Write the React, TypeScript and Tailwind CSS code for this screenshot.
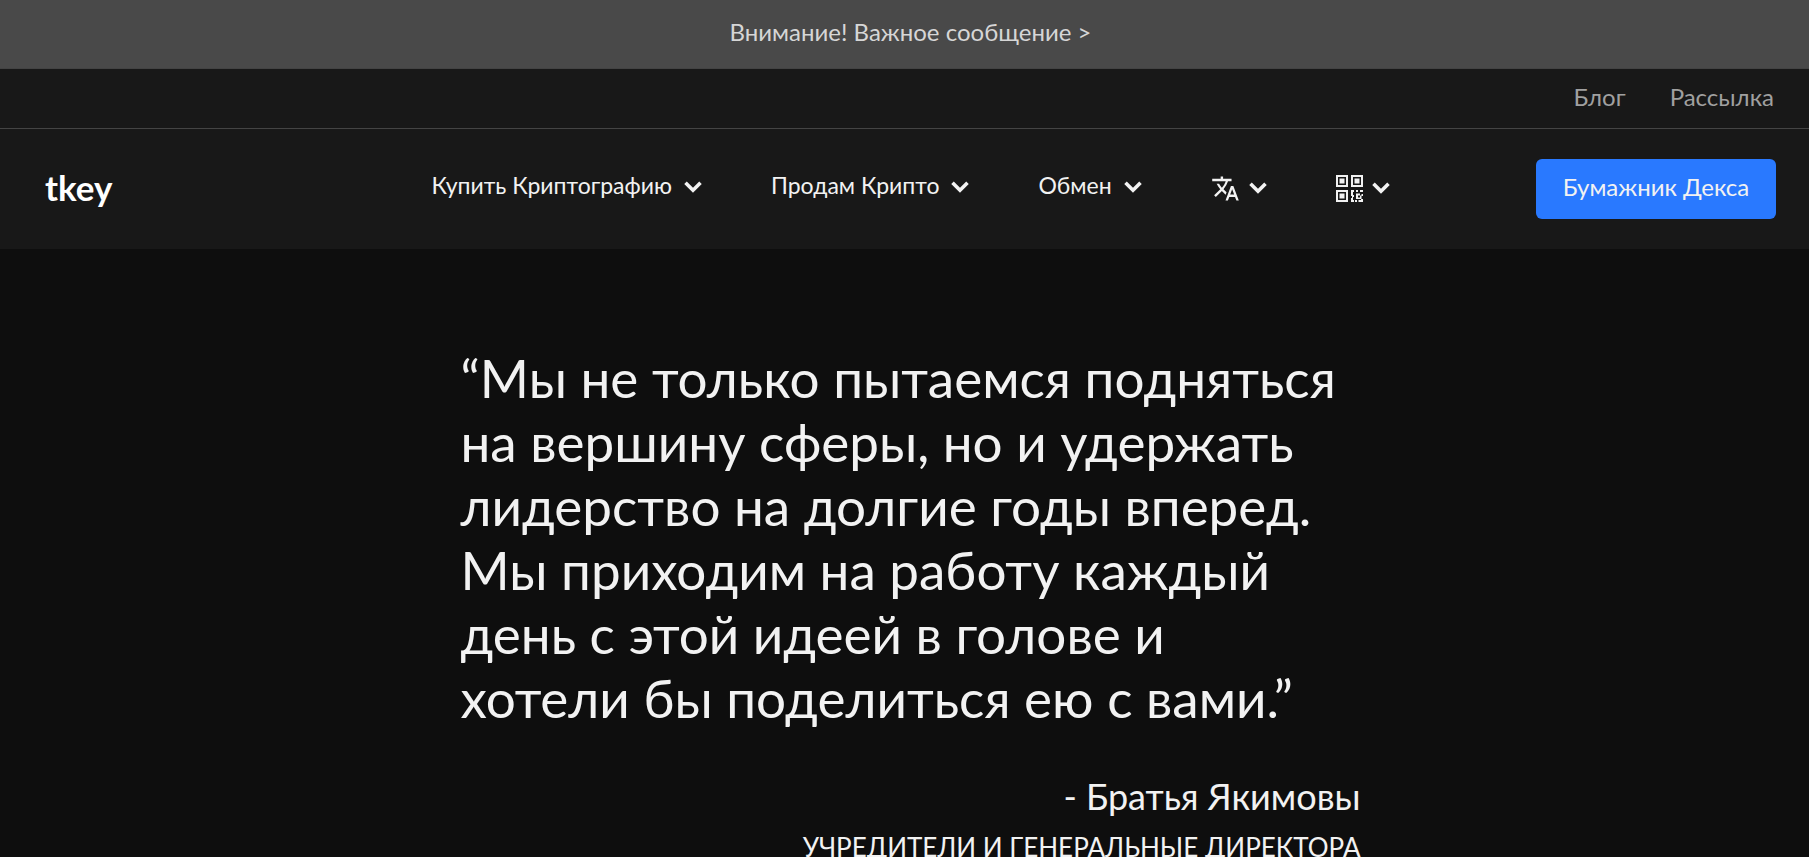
import type { ReactNode } from "react";
import { MdTranslate } from "react-icons/md";

const quote = [
  "“Мы не только пытаемся подняться",
  "на вершину сферы, но и удержать",
  "лидерство на долгие годы вперед.",
  "Мы приходим на работу каждый",
  "день с этой идеей в голове и",
  "хотели бы поделиться ею с вами.”",
];

function Chevron() {
  return (
    <svg viewBox="0 0 18 12" className="h-3 w-[18px] shrink-0" aria-hidden="true">
      <path d="M1.5 1.8 9 9.2l7.5-7.4" fill="none" stroke="currentColor" strokeWidth="3.6" />
    </svg>
  );
}

function QrIcon() {
  return (
    <svg viewBox="0 0 27 27" className="size-[27px] shrink-0" fill="currentColor" aria-hidden="true">
      <path
        fillRule="evenodd"
        d="M0 0h12v12H0zM2 2v8h8V2zM15 0h12v12H15zM17 2v8h8V2zM0 15h12v12H0zM2 17v8h8v-8z"
      />
      <path d="M3.5 3.5h5v5h-5zM18.5 3.5h5v5h-5zM3.5 18.5h5v5h-5z" />
      <path d="M15 15h3v2h-1v3h1v2h-1v3h1v2h-3v-4h1v-2h-1zM20 15h2v2h-2zM24 15h3v2h-3z" />
      <path d="M20 18.5h4v2h-2v2h2v-2h1.5v-1.5H27v2h-1.5v3H20zM19 25h2v2h-2zM22.5 25H25v-1h2v3h-4.5z" />
    </svg>
  );
}

function NavItem({ children }: { children: ReactNode }) {
  return (
    <button type="button" className="flex items-center gap-3 pb-1 whitespace-nowrap">
      <span className="pb-1">{children}</span>
      <Chevron />
    </button>
  );
}

function IconItem({ children, label }: { children: ReactNode; label: string }) {
  return (
    <button type="button" aria-label={label} className="flex items-center gap-[9px] pb-0.5">
      {children}
      <Chevron />
    </button>
  );
}

export default function App() {
  return (
    <div className="min-h-screen overflow-hidden bg-[#0e0e0e] font-[Lato,'Open_Sans',sans-serif] text-[#f2f2f2]">
      <a
        href="#"
        className="flex h-[69px] items-center justify-center border-b border-[#434343] bg-[#494949] pb-1 pl-3 text-2xl text-[#d6d6d6]"
      >
        Внимание! Важное сообщение &gt;
      </a>
      <header className="bg-[#181818]">
        <div className="flex h-[60px] items-center justify-end gap-11 border-b border-[#444] pr-[35px] pb-1 text-2xl text-[#a0a0a0]">
          <a href="#">Блог</a>
          <a href="#">Рассылка</a>
        </div>
        <div className="flex h-[120px] items-center justify-between pr-[33px] pl-[45px]">
          <a href="#" className="w-60 pb-1 text-[35px] font-bold text-white">
            tkey
          </a>
          <nav className="flex items-center gap-[69px] text-[23px]">
            <NavItem>Купить Криптографию</NavItem>
            <NavItem>Продам Крипто</NavItem>
            <NavItem>Обмен</NavItem>
            <IconItem label="Язык">
              <MdTranslate className="size-[29px]" />
            </IconItem>
            <IconItem label="QR-код">
              <QrIcon />
            </IconItem>
          </nav>
          <button type="button" className="h-[60px] w-60 rounded-md bg-[#2979ff] pb-1 text-2xl">
            Бумажник Декса
          </button>
        </div>
      </header>
      <main className="pt-[97px] pl-3">
        <figure className="mx-auto w-full max-w-[900px]">
          <blockquote className="text-[53px] leading-[64px] whitespace-nowrap">
            {quote.map((line) => (
              <span key={line} className="block">
                {line}
              </span>
            ))}
          </blockquote>
          <figcaption className="mt-[41px] text-right">
            <p className="text-4xl leading-[50px]">- Братья Якимовы</p>
            <p className="text-[26px] leading-[52px] uppercase">Учредители и генеральные директора</p>
          </figcaption>
        </figure>
      </main>
    </div>
  );
}
